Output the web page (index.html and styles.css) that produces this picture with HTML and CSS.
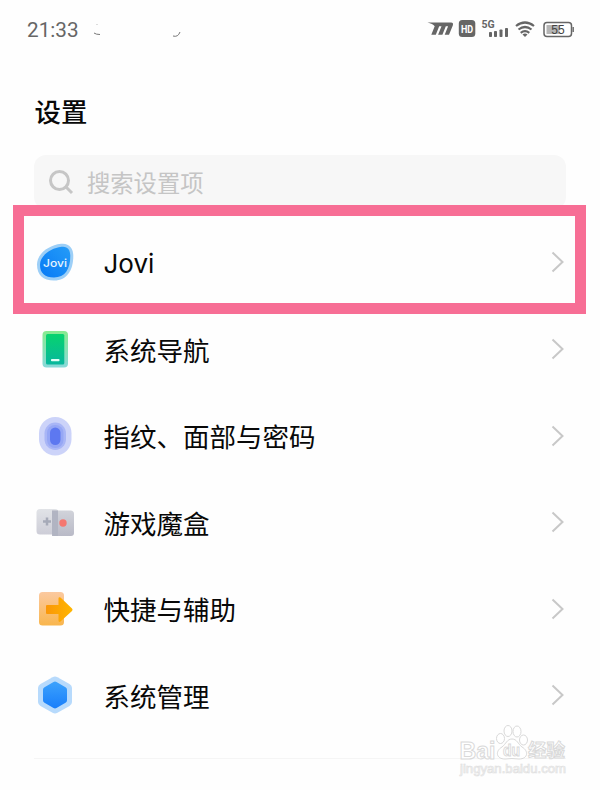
FILE: index.html
```html
<!DOCTYPE html>
<html lang="zh-CN">
<head>
<meta charset="utf-8">
<title>设置</title>
<link rel="stylesheet" href="styles.css">
</head>
<body>
<main class="screen">
  <header class="status">
    <span class="time">21:33</span>
    <svg class="smudge" width="92" height="24" viewBox="0 0 92 24" fill="none" stroke="#777"><path d="M5 6v1" stroke="#bbb"/><path d="M2 15q2 1.500 6 1.500"/><path d="M81 18q5 1.500 7-4" /></svg>
    <svg class="signals" width="150" height="30" viewBox="425 15 150 30">
      <g fill="#666">
        <path d="M427.500 22.500H451q2.800 0 1.800 3L449 34.700h-4.300l3.400-8.500h-2.300l-3.400 8.500h-4.300l3.400-8.500h-2.300l-3.400 8.500h-4.500l3.400-8.500q-2-2.500-7.200-3.700z"/>
        <rect x="458.800" y="20" width="16.500" height="17" rx="3.500"/>
        <rect x="489" y="32" width="3" height="5" rx=".8"/><rect x="494" y="31" width="3" height="6" rx=".8"/><rect x="499.500" y="29.500" width="3" height="7.500" rx=".8"/><rect x="505" y="28" width="3" height="9" rx=".8"/>
        <path d="M522.500 34.500q2.500-2 5 0l-2.500 2.500z"/>
      </g>
      <text class="hd" x="461" y="32.500" textLength="12.200" lengthAdjust="spacingAndGlyphs">HD</text>
      <text class="net" x="481.500" y="28">5G</text>
      <g fill="none" stroke="#666" stroke-width="2.200"><path d="M516 26q9-7 18 0M518.500 29.500q6.500-5 13 0M520.700 32.800q4.300-3.200 8.600 0"/></g>
      <rect x="544" y="22.500" width="27.500" height="14" rx="3" fill="#fff" stroke="#666" stroke-width="1.500"/>
      <rect x="546.500" y="25" width="13" height="9" fill="#b5b5b5"/>
      <path d="M573.200 27v5" stroke="#777" stroke-width="1.600"/>
      <text class="level" x="558" y="34" text-anchor="middle">55</text>
    </svg>
  </header>
  <h1 class="title">设置</h1>
  <div class="search">
    <svg width="28" height="28" viewBox="0 0 28 28" fill="none" stroke="#c6c6c6" stroke-width="3"><circle cx="12.500" cy="12.500" r="9"/><path d="M19 19l6 6"/></svg>
    <span>搜索设置项</span>
  </div>
  <ul class="list">
    <li class="row">
      <svg class="icon" viewBox="0 0 40 40"><defs><linearGradient id="jo" x1="1" y1="0" x2="0" y2="1"><stop stop-color="#259cf8"/><stop offset="1" stop-color="#087af5"/></linearGradient></defs><path d="M26 1.800C34 .8 38.300 6 38.300 14C38.300 28 32 38.500 19 38.500C8 38.500 2 33 2 22.500C2 12 13 3.500 26 1.800z" fill="#9dcff7"/><path d="M26.500 4.800C32.500 4 35.300 7.500 35.300 14C35.300 27 30 35.500 19 35.500C10 35.500 5 31.500 5 22.800C5 14 15 6.300 26.500 4.800z" fill="url(#jo)"/><text class="jovi" x="8" y="25" textLength="24" lengthAdjust="spacingAndGlyphs">Jovi</text></svg>
      <span class="label latin">Jovi</span>
      <svg class="arrow" viewBox="0 0 14 22"><path d="M1.500 1.500l10 9.500-10 9.500"/></svg>
    </li>
    <li class="row">
      <svg class="icon" viewBox="0 0 40 40"><defs><linearGradient id="na" x2="0" y2="1"><stop stop-color="#88ea90"/><stop offset="1" stop-color="#88d9d9"/></linearGradient><linearGradient id="nb" x2="0" y2="1"><stop stop-color="#08d36e"/><stop offset="1" stop-color="#07b79d"/></linearGradient></defs><rect x="7.500" y="2" width="25.500" height="36.500" rx="4" fill="url(#na)"/><rect x="11" y="5" width="18.300" height="30.500" rx="1.500" fill="url(#nb)"/><rect x="16" y="30" width="8.500" height="2.200" rx=".8" fill="#e1fff6"/></svg>
      <span class="label">系统导航</span>
      <svg class="arrow" viewBox="0 0 14 22"><path d="M1.500 1.500l10 9.500-10 9.500"/></svg>
    </li>
    <li class="row">
      <svg class="icon" viewBox="0 0 40 40"><rect x="4" y="1" width="32.500" height="38.500" rx="16.200" fill="#ccd3f9"/><rect x="9.500" y="6.500" width="21.500" height="27.500" rx="10.750" fill="#a9b6f6"/><rect x="12" y="9" width="16.500" height="23" rx="8" fill="#96a7f5"/><rect x="15" y="11.500" width="10.500" height="17.500" rx="5.250" fill="#5d78f0"/></svg>
      <span class="label">指纹、面部与密码</span>
      <svg class="arrow" viewBox="0 0 14 22"><path d="M1.500 1.500l10 9.500-10 9.500"/></svg>
    </li>
    <li class="row">
      <svg class="icon" viewBox="0 0 40 40"><defs><linearGradient id="ga" x2="0" y2="1"><stop stop-color="#e1e3e7"/><stop offset="1" stop-color="#cdcdd7"/></linearGradient><linearGradient id="gb" x2="0" y2="1"><stop stop-color="#d1d3da"/><stop offset="1" stop-color="#b9bac7"/></linearGradient></defs><rect x="1.500" y="7" width="22" height="25.500" rx="3.500" fill="url(#ga)"/><path d="M17 8.500h18.500q3.500 0 3.500 3.500v19q0 3-3 3H17z" fill="url(#gb)"/><path d="M17 8.500h6V34h-4q-2 0-2-2z" fill="#b1b4c2"/><path d="M12 15.500v8M8 19.500h8" stroke="#a6aab8" stroke-width="2.500"/><circle cx="28" cy="21" r="3.700" fill="#f57770"/></svg>
      <span class="label">游戏魔盒</span>
      <svg class="arrow" viewBox="0 0 14 22"><path d="M1.500 1.500l10 9.500-10 9.500"/></svg>
    </li>
    <li class="row">
      <svg class="icon" viewBox="0 0 40 40"><defs><linearGradient id="qa" x2="0" y2="1"><stop stop-color="#fbc9a0"/><stop offset="1" stop-color="#f9b64d"/></linearGradient><linearGradient id="qb"><stop stop-color="#fa9708"/><stop offset="1" stop-color="#ffb600"/></linearGradient></defs><rect x="4" y="3" width="25" height="33.500" rx="3.500" fill="url(#qa)"/><path d="M12 16h11.500V9.500q0-2 2-1L37 19.500q1.200 1.200 0 2.400L25.500 32.500q-2 1.200-2-1V25H12q-1 0-1-1v-7q0-1 1-1z" fill="url(#qb)"/></svg>
      <span class="label">快捷与辅助</span>
      <svg class="arrow" viewBox="0 0 14 22"><path d="M1.500 1.500l10 9.500-10 9.500"/></svg>
    </li>
    <li class="row">
      <svg class="icon" viewBox="0 0 40 40"><defs><linearGradient id="ma" x2="0" y2="1"><stop stop-color="#3ca2fc"/><stop offset="1" stop-color="#187efb"/></linearGradient></defs><path d="M17.500 2.200q2.500-1.400 5 0l12 6.800q2.500 1.500 2.500 4v14q0 2.500-2.500 4l-12 6.800q-2.500 1.400-5 0l-12-6.800Q3 29.500 3 27V13q0-2.500 2.500-4z" fill="#b7dafc"/><path d="M18.500 7q1.500-.8 3 0l9 5.200q1.500.8 1.500 2.500v10.600q0 1.700-1.500 2.500l-9 5.200q-1.500.8-3 0l-9-5.200Q8 27 8 25.300V14.700q0-1.700 1.500-2.500z" fill="url(#ma)"/></svg>
      <span class="label">系统管理</span>
      <svg class="arrow" viewBox="0 0 14 22"><path d="M1.500 1.500l10 9.500-10 9.500"/></svg>
    </li>
  </ul>
  <hr class="divider">
  <div class="highlight"></div>
  <svg class="watermark" width="120" height="60" viewBox="455 720 120 60">
    <g fill="#fff" stroke="#d9d9d9" stroke-width="1">
      <text class="brand" x="459.500" y="758.500" textLength="36" lengthAdjust="spacingAndGlyphs">Bai</text>
      <path d="M512 739c-5 0-6 5-10 8-7 4-6 12 3 12q7-1 14 0c9 0 10-8 3-12-4-3-5-8-10-8z"/>
      <ellipse cx="500.500" cy="738.500" rx="4" ry="5"/><ellipse cx="508" cy="731" rx="4" ry="5.500"/><ellipse cx="517" cy="731.500" rx="4" ry="5.500"/><ellipse cx="523.500" cy="740" rx="4" ry="5"/>
      <text class="du" x="503" y="756" textLength="17" lengthAdjust="spacingAndGlyphs">du</text>
      <text class="exp" x="528" y="757">经验</text>
    </g>
    <text class="site" x="460" y="772.500" textLength="106" lengthAdjust="spacingAndGlyphs">jingyan.baidu.com</text>
  </svg>
</main>
</body>
</html>
```

FILE: styles.css
```css
* { box-sizing: border-box; }
body { margin: 0; background: #fefefe; color: #080808; font-family: "Noto Sans", "Noto Sans CJK SC", sans-serif; }
.screen { position: relative; width: 600px; height: 790px; overflow: hidden; }
.status { display: flex; align-items: center; height: 60px; padding: 0 25px 0 27px; }
.time { width: 52px; font: 20.700px/30px Roboto, sans-serif; color: #666; white-space: nowrap; }
.smudge { margin-left: 13px; }
.signals { margin-left: auto; }
.hd { font: bold 10.500px Roboto, sans-serif; fill: #fff; }
.net { font: bold 10.500px Roboto, sans-serif; fill: #666; }
.level { font: 12px "Liberation Sans", sans-serif; fill: #444; }
.title { margin: 31px 0 0 34.500px; font: 500 26.400px/40px "Noto Sans CJK SC", sans-serif; }
.search { display: flex; align-items: center; gap: 12px; height: 54px; margin: 24px 34px 0; padding-left: 13px; border-radius: 12px; background: #f7f7f7; color: #c5c5c5; font: 23.300px/34px "Noto Sans CJK SC", sans-serif; }
.list { margin: 10.200px 0 0; padding: 0; list-style: none; }
.row { display: flex; align-items: center; height: 86.600px; padding: 0 35px; }
.icon { width: 40px; height: 40px; flex: none; }
.label { flex: 1; margin-left: 28.500px; padding-top: 1px; font: 26.500px/40px "Noto Sans CJK SC", sans-serif; }
.latin { padding-top: 4px; font-family: Inter, sans-serif; font-size: 26px; }
.arrow { width: 14px; height: 22px; fill: none; stroke: #c8c8c8; stroke-width: 2; }
.divider { height: 1px; margin: 19px 34px 0; border: 0; background: #f5f5f5; }
.highlight { position: absolute; left: 13px; top: 205px; width: 573px; height: 109px; border: 11px solid #f76e95; }
.watermark { position: absolute; left: 455px; top: 720px; }
.jovi { font: 500 11px Inter, sans-serif; fill: #e7f6ff; }
.brand { font: bold 24px "Liberation Sans", sans-serif; }
.du { font: bold 16px "Liberation Sans", sans-serif; }
.exp { font: bold 18.500px "Noto Sans CJK SC", sans-serif; }
.site { font: 12px "Liberation Sans", sans-serif; fill: #fff; stroke: #e1e1e1; stroke-width: .7; }
```
